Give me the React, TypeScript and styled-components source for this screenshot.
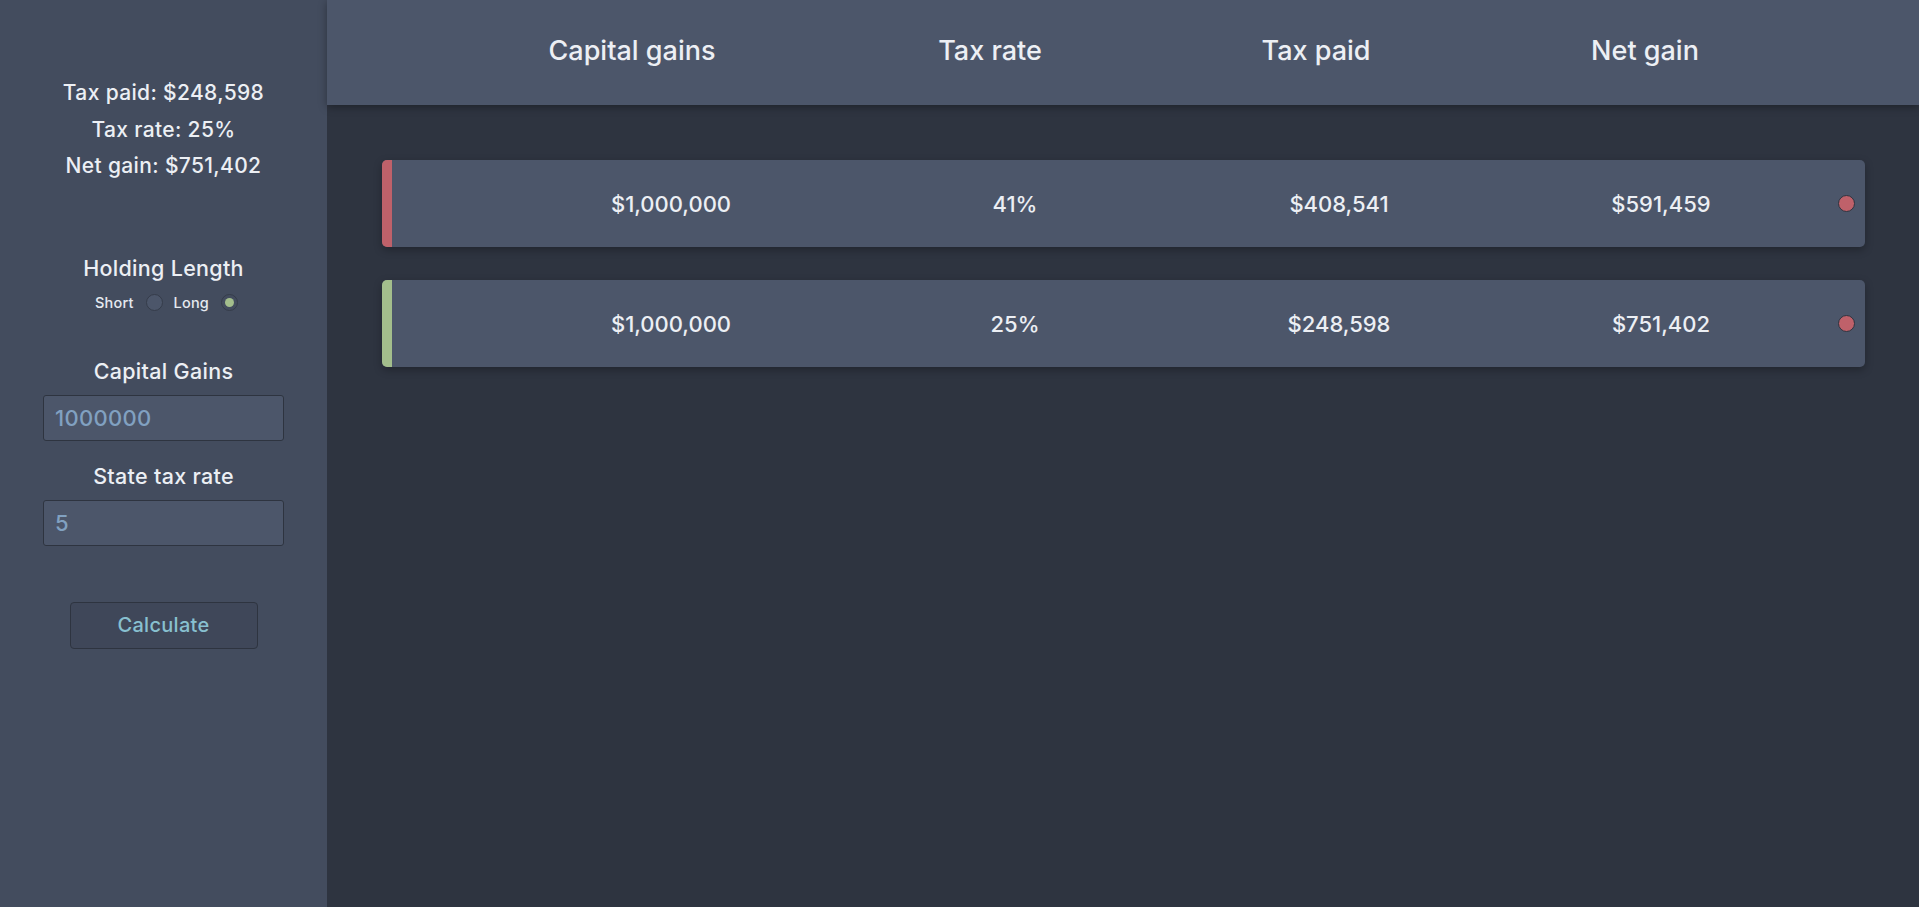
import React from "react";
import styled, { createGlobalStyle } from "styled-components";

const GlobalStyle = createGlobalStyle`
  html, body {
    margin: 0;
    padding: 0;
    height: 100%;
    background: #2e3440;
  }
  body {
    font-family: Inter, "Noto Sans", "Liberation Sans", sans-serif;
    color: #eceff4;
    overflow: hidden;
  }
  #root { height: 100%; }
  * { box-sizing: border-box; }
`;

const Layout = styled.div`
  display: flex;
  width: 100%;
  height: 907px;
`;

const Sidebar = styled.aside`
  width: 327px;
  flex: 0 0 327px;
  background: #434c5e;
  display: flex;
  flex-direction: column;
  align-items: center;
  padding-top: 75px;
`;

const Summary = styled.div`
  display: flex;
  flex-direction: column;
  align-items: center;
  font-size: 21px;
  font-weight: 500;
  letter-spacing: 0.35px;
  line-height: 36.5px;
  color: #eceff4;
`;

const Label = styled.div<{ $top: number }>`
  margin-top: ${(p) => p.$top}px;
  font-size: 21.5px;
  font-weight: 500;
  letter-spacing: 0.3px;
  line-height: 24px;
  color: #eceff4;
  text-align: center;
`;

const RadioRow = styled.div`
  margin-top: 13px;
  height: 20px;
  display: flex;
  align-items: center;
  gap: 11px;
  padding-left: 6px;
  font-size: 14.5px;
  font-weight: 500;
  letter-spacing: 0.2px;
  color: #e5e9f0;
`;

const RadioOption = styled.label`
  display: flex;
  align-items: center;
  gap: 12px;
`;

const Radio = styled.span<{ $checked?: boolean }>`
  width: 17px;
  height: 17px;
  border-radius: 50%;
  border: 1.5px solid #353c4a;
  background: ${(p) => (p.$checked ? "#434c5e" : "#4c566a")};
  display: flex;
  align-items: center;
  justify-content: center;
  &::after {
    content: "";
    display: ${(p) => (p.$checked ? "block" : "none")};
    width: 9px;
    height: 9px;
    border-radius: 50%;
    background: #a3be8c;
  }
`;

const Input = styled.input`
  margin-top: 12px;
  width: 241px;
  height: 46px;
  background: #4c566a;
  border: 1px solid #2e3440;
  border-radius: 3px;
  padding: 0 11px;
  font-family: inherit;
  font-size: 22px;
  font-weight: 500;
  letter-spacing: 0.3px;
  color: #81a1c1;
  outline: none;
`;

const Button = styled.button`
  margin-top: 56px;
  width: 188px;
  height: 47px;
  background: #3f4759;
  border: 1px solid #2e3440;
  border-radius: 4px;
  font-family: inherit;
  font-size: 20px;
  font-weight: 500;
  letter-spacing: 0.3px;
  color: #88c0d0;
  cursor: pointer;
`;

const Main = styled.main`
  flex: 1;
  display: flex;
  flex-direction: column;
  background: #2e3440;
  min-width: 0;
`;

const Header = styled.header`
  height: 105px;
  background: #4c566a;
  box-shadow: 0 2px 8px rgba(0, 0, 0, 0.35);
  display: grid;
  grid-template-columns: 344px 372px 280px 378px;
  padding-left: 133px;
  padding-bottom: 5px;
  align-items: center;
  position: relative;
  z-index: 1;
`;

const HeaderCell = styled.div`
  text-align: center;
  font-size: 27px;
  font-weight: 500;
  color: #eceff4;
`;

const Rows = styled.section`
  display: flex;
  flex-direction: column;
  gap: 33px;
  padding: 55px 54px 0 55px;
`;

const Card = styled.div`
  height: 87px;
  display: flex;
  align-items: center;
  background: #4c566a;
  border-radius: 5px;
  overflow: hidden;
  box-shadow: 0 3px 8px rgba(0, 0, 0, 0.28);
`;

const Bar = styled.div<{ $color: string }>`
  align-self: stretch;
  width: 10px;
  background: ${(p) => p.$color};
`;

const Cells = styled.div`
  display: grid;
  grid-template-columns: 342px 346px 302px 342px;
  margin-left: 108px;
`;

const Cell = styled.div`
  text-align: center;
  font-size: 22px;
  font-weight: 500;
  color: #eceff4;
`;

const Dot = styled.span`
  margin-left: 6px;
  width: 17px;
  height: 17px;
  border-radius: 50%;
  background: #bf616a;
  border: 1.5px solid #2e3440;
`;

const rows = [
  { color: "#bf616a", gains: "$1,000,000", rate: "41%", paid: "$408,541", net: "$591,459" },
  { color: "#a3be8c", gains: "$1,000,000", rate: "25%", paid: "$248,598", net: "$751,402" },
];

export default function App() {
  return (
    <>
      <GlobalStyle />
      <Layout>
        <Sidebar>
          <Summary>
            <div>Tax paid: $248,598</div>
            <div>Tax rate: 25%</div>
            <div>Net gain: $751,402</div>
          </Summary>
          <Label $top={71}>Holding Length</Label>
          <RadioRow>
            <RadioOption>
              Short <Radio />
            </RadioOption>
            <RadioOption>
              Long <Radio $checked />
            </RadioOption>
          </RadioRow>
          <Label $top={46}>Capital Gains</Label>
          <Input defaultValue="1000000" />
          <Label $top={23}>State tax rate</Label>
          <Input defaultValue="5" />
          <Button>Calculate</Button>
        </Sidebar>
        <Main>
          <Header>
            <HeaderCell>Capital gains</HeaderCell>
            <HeaderCell>Tax rate</HeaderCell>
            <HeaderCell>Tax paid</HeaderCell>
            <HeaderCell>Net gain</HeaderCell>
          </Header>
          <Rows>
            {rows.map((r, i) => (
              <Card key={i}>
                <Bar $color={r.color} />
                <Cells>
                  <Cell>{r.gains}</Cell>
                  <Cell>{r.rate}</Cell>
                  <Cell>{r.paid}</Cell>
                  <Cell>{r.net}</Cell>
                </Cells>
                <Dot />
              </Card>
            ))}
          </Rows>
        </Main>
      </Layout>
    </>
  );
}
